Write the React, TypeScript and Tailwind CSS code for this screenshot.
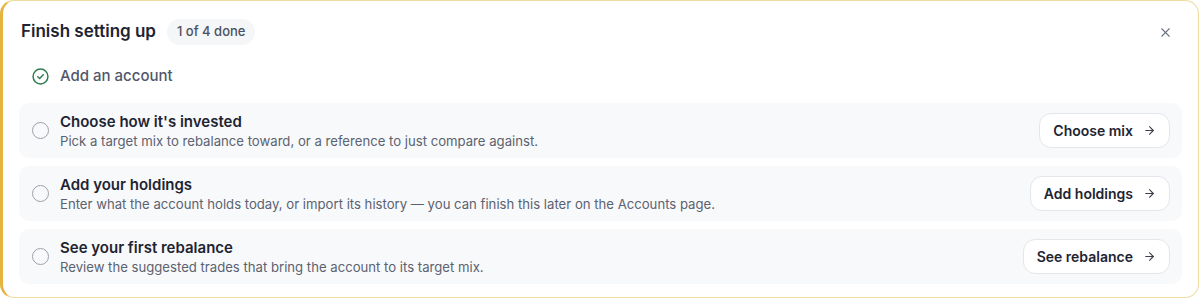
import { ArrowRight, X } from 'lucide-react';

const steps = [
  {
    title: "Choose how it's invested",
    summary: 'Pick a target mix to rebalance toward, or a reference to just compare against.',
    action: 'Choose mix',
  },
  {
    title: 'Add your holdings',
    summary:
      'Enter what the account holds today, or import its history \u2014 you can finish this later on the Accounts page.',
    action: 'Add holdings',
  },
  {
    title: 'See your first rebalance',
    summary: 'Review the suggested trades that bring the account to its target mix.',
    action: 'See rebalance',
  },
];

const CheckCircle = () => (
  <svg width="17" height="17" viewBox="0 0 16 16" fill="none" className="shrink-0">
    <circle cx="8" cy="8" r="7" stroke="#2e7d4f" strokeWidth="1.4" />
    <path d="M5.4 8.2 7.2 9.9 10.6 6.3" stroke="#2e7d4f" strokeWidth="1.4" strokeLinecap="round" strokeLinejoin="round" />
  </svg>
);

const StepRow = ({ title, summary, action }: { title: string; summary: string; action: string }) => {
  return (
    <div className="flex h-[55px] items-center rounded-[10px] bg-[#f8f9fb] pl-[13px] pr-3">
      <span className="h-[17px] w-[17px] shrink-0 rounded-full border-[1.5px] border-[#9ca0a8]" />
      <div className="ml-[11px] flex min-w-0 flex-1 flex-col">
        <span className="text-[15px] font-semibold leading-5 text-[#1e2431]">{title}</span>
        <span className="text-[13.15px] leading-[18px] text-[#5b6270]">{summary}</span>
      </div>
      <button className="flex h-[35px] items-center gap-2.5 rounded-xl border border-[#e3e6ea] bg-white px-[13px] text-[14px] font-semibold text-[#1e2431]">
        {action}
        <ArrowRight size={13} strokeWidth={2} className="text-[#3a404c]" />
      </button>
    </div>
  );
};

export default function App() {
  return (
    <div className="bg-white font-['Inter',sans-serif]" style={{ width: 1200, height: 299 }}>
      <div className="h-[298px] w-[1199px] rounded-[14px] border border-l-[3px] border-[#f0dc9e] border-l-[#e6b43e] bg-white px-4 pt-[17px] pb-[15px]">
        <div className="flex h-7 items-center pl-[2px]">
          <h2 className="text-[17px] font-semibold text-[#1e2431]">Finish setting up</h2>
          <span className="ml-[11px] rounded-full bg-[#f4f6f8] px-2.5 py-[3px] text-[13px] font-medium text-[#4b5160]">
            1 of 4 done
          </span>
          <X size={15} strokeWidth={1.75} className="ml-auto mr-[9px] text-[#6b7280]" />
        </div>
        <div className="mt-[13px] flex h-[35px] items-center gap-[11px] pl-[13px]">
          <CheckCircle />
          <span className="text-[15px] font-medium text-[#50576a]">Add an account</span>
        </div>
        <div className="mt-[9px] flex flex-col gap-2">
          {steps.map((s) => (
            <StepRow key={s.title} {...s} />
          ))}
        </div>
      </div>
    </div>
  );
}
